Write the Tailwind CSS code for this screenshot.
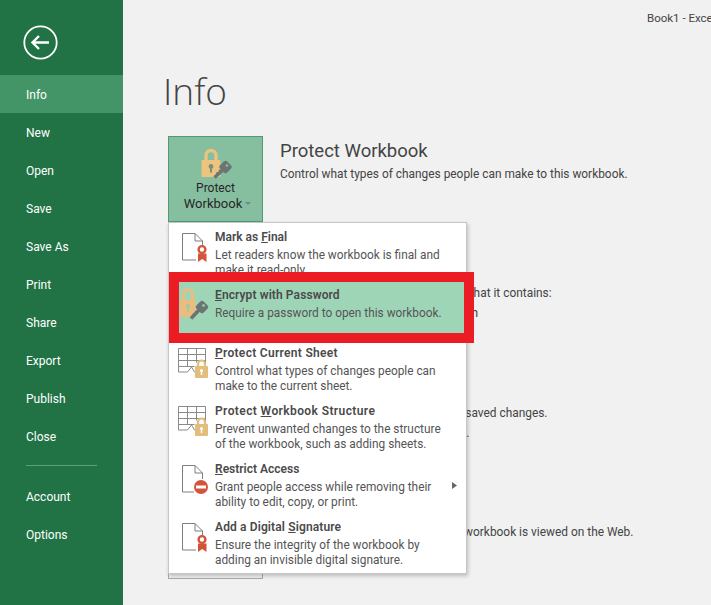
<!DOCTYPE html>
<html>
<head>
<meta charset="utf-8">
<script src="https://cdn.jsdelivr.net/npm/@tailwindcss/browser@4"></script>
</head>
<body class="m-0">
<div class="relative flex w-[711px] h-[605px] overflow-hidden bg-[#f1f1f1] font-['Roboto','Open_Sans',sans-serif] text-[#444444]">
  <aside class="w-[123px] shrink-0 bg-[#217346] text-white text-[12px] flex flex-col">
    <div class="h-[75px] pl-[23px] pt-[25px]">
      <svg width="35" height="35" viewBox="0 0 35 35" fill="none" stroke="white"><circle cx="17.500" cy="17.500" r="16.200" stroke-width="1.800"/><path d="M10 17.500H26M16 11l-6.500 6.500L16 24" stroke-width="2.400"/></svg>
    </div>
    <div class="h-[38px] flex items-center pl-[26px] pt-[2px] bg-[#439467]">Info</div>
    <div class="h-[38px] flex items-center pl-[26px] pt-[2px]">New</div>
    <div class="h-[38px] flex items-center pl-[26px] pt-[2px]">Open</div>
    <div class="h-[38px] flex items-center pl-[26px] pt-[2px]">Save</div>
    <div class="h-[38px] flex items-center pl-[26px] pt-[2px]">Save As</div>
    <div class="h-[38px] flex items-center pl-[26px] pt-[2px]">Print</div>
    <div class="h-[38px] flex items-center pl-[26px] pt-[2px]">Share</div>
    <div class="h-[38px] flex items-center pl-[26px] pt-[2px]">Export</div>
    <div class="h-[38px] flex items-center pl-[26px] pt-[2px]">Publish</div>
    <div class="h-[38px] flex items-center pl-[26px] pt-[2px]">Close</div>
    <div class="mt-[10px] mb-[11px] ml-[26px] w-[71px] h-px bg-[#5f9e7c]"></div>
    <div class="h-[38px] flex items-center pl-[26px] pt-[2px]">Account</div>
    <div class="h-[38px] flex items-center pl-[26px] pt-[2px]">Options</div>
  </aside>

  <main class="relative flex-1 pl-[40px]">
    <div class="h-[10px]"></div>
    <div class="text-[11.500px] leading-[16px] pl-[484px] whitespace-nowrap">Book1 - Excel</div>
    <h1 class="mt-[39px] h-[71px] font-['Open_Sans',sans-serif] text-[37px] leading-[52px] font-light text-[#444444]">Info</h1>

    <div class="pl-[5px] flex flex-col gap-[33px]">
      <section class="flex gap-[17px] h-[86px]">
        <div class="relative w-[95px] h-[86px] shrink-0 bg-[#86bfa0] border border-[#4f9a72] flex flex-col items-center text-[#262626] text-[12px] leading-[16px]">
          <svg class="mt-[11px] mb-[1px]" width="34" height="31" viewBox="0 0 34 31"><path d="M7 13V7.500a5 5 0 0 1 10 0V13" fill="none" stroke="#edc47e" stroke-width="3.400"/><rect x="2.500" y="12" width="19" height="17" rx="1" fill="#edc47e"/><circle cx="12" cy="18.500" r="2.400" fill="#7d8f78"/><rect x="11" y="19" width="2" height="5.500" fill="#7d8f78"/><path d="M25 21L15.500 29.500" stroke="#6d7573" stroke-width="3.400"/><path d="M17.500 24.500l2.500 2.500M20 22l2.500 2.500" stroke="#6d7573" stroke-width="2"/><rect x="21.500" y="14" width="10" height="10" rx="2" transform="rotate(45 26.500 19)" fill="#6d7573"/><circle cx="28" cy="17.500" r="1.300" fill="#86bfa0"/></svg>
          <span>Protect</span>
          <span class="flex items-center gap-[3px] pl-[4px] text-[13px]">Workbook<svg width="6" height="4" viewBox="0 0 6 4"><path d="M0 0h6L3 3z" fill="#6b8c78"/></svg></span>
        </div>
        <div class="pt-[3px]">
          <h2 class="text-[18.500px] leading-[24px] font-normal">Protect Workbook</h2>
          <p class="text-[11.900px] leading-[20px] mt-[1px]">Control what types of changes people can make to this workbook.</p>
        </div>
      </section>

      <section class="flex gap-[17px] h-[86px]">
        <div class="w-[95px] h-[86px] shrink-0 border border-[#ababab]"></div>
        <div class="pt-[2px]">
          <h2 class="text-[18.500px] leading-[24px] font-normal">Inspect Workbook</h2>
          <p class="text-[11.900px] leading-[20px] mt-[2px] whitespace-nowrap">Before publishing this file, be aware that it contains:</p>
          <p class="text-[11.900px] leading-[20px] whitespace-nowrap">Document properties and printer path</p>
        </div>
      </section>

      <section class="flex gap-[17px] h-[86px]">
        <div class="w-[95px] h-[86px] shrink-0 border border-[#ababab]"></div>
        <div class="pt-[2px]">
          <h2 class="text-[18.500px] leading-[24px] font-normal">Manage Workbook</h2>
          <p class="text-[11.900px] leading-[20px] mt-[3px] whitespace-nowrap">Check in, check out, and recover unsaved changes.</p>
          <p class="text-[11.900px] leading-[20px] tracking-[0.2px] whitespace-nowrap">There are no unsaved changes yet.</p>
        </div>
      </section>

      <section class="flex gap-[17px] h-[86px]">
        <div class="w-[95px] h-[86px] shrink-0 border border-[#ababab]"></div>
        <div class="pt-[2px]">
          <h2 class="text-[18.500px] leading-[24px] font-normal">Browser View Options</h2>
          <p class="text-[11.900px] leading-[20px] mt-[3px] whitespace-nowrap">Pick what users can see when this workbook is viewed on the Web.</p>
        </div>
      </section>
    </div>

    <!-- dropdown menu -->
    <div class="absolute left-[45px] top-[222px] w-[299px] h-[352px] bg-white border border-[#c6c6c6] shadow-[1px_2px_4px_rgba(0,0,0,0.22)] pt-[3px] text-[11.850px] leading-[18px] text-[#555555]">
      <div class="relative h-[58px] flex">
        <div class="w-[46px] shrink-0 pt-[6px] pl-[12px]">
          <svg width="28" height="32" viewBox="0 0 28 32" fill="none"><path d="M15 28H1.500V1.500H14L21.500 9V13M14 1.500V9H21.500" stroke="#7f7f7f"/><circle cx="21" cy="17.500" r="3.400" stroke="#d2553a" stroke-width="2.400"/><path d="M17 21.500h8.500v8.500L21.200 27 17 30z" fill="#d2553a"/></svg>
        </div>
        <div class="pt-[2px]">
          <div class="font-semibold text-[12px] text-[#4a4a4a]">Mark as <span class="underline">F</span>inal</div>
          <div class="whitespace-nowrap">Let readers know the workbook is final and</div>
          <div class="-mt-[3px] whitespace-nowrap">make it read-only.</div>
        </div>
      </div>

      <div class="relative h-[58px] flex">
        <div class="absolute left-0 -right-[8px] -top-[12px] -bottom-[1px] bg-[#9fd5b7] border-[10px] border-[#ec1c24]"></div>
        <div class="relative w-[46px] shrink-0 pt-[3px] pl-[11px]">
          <svg width="30" height="34" viewBox="0 0 30 34"><path d="M3.500 14V7a4.500 4.500 0 0 1 9 0v7" fill="none" stroke="#e9bd7e" stroke-width="3"/><rect x="0" y="13" width="15.500" height="17" fill="#e9bd7e"/><circle cx="8" cy="19" r="2.200" fill="#a9c79f"/><rect x="7" y="19" width="2" height="6" fill="#a9c79f"/><path d="M20 22L11 31.500" stroke="#6d7573" stroke-width="3.400"/><path d="M13 26.500l2.500 2.500M15.500 24l2.500 2.500" stroke="#6d7573" stroke-width="2"/><rect x="17" y="15" width="10" height="10" rx="2" transform="rotate(45 22 20)" fill="#6d7573"/><circle cx="23.500" cy="18.500" r="1.300" fill="#9fd5b7"/></svg>
        </div>
        <div class="relative pt-[2px]">
          <div class="font-semibold text-[12px] tracking-[0.1px] text-[#4a4a4a]"><span class="underline">E</span>ncrypt with Password</div>
          <div class="whitespace-nowrap">Require a password to open this workbook.</div>
        </div>
      </div>

      <div class="relative h-[58px] flex">
        <div class="w-[46px] shrink-0 pt-[6px] pl-[9px]">
          <svg width="32" height="34" viewBox="0 0 32 34" fill="none"><path d="M.500 24V.500h27v16M.500 6.500h27M.500 12.500h27M.500 18.500h16M9.500.500v18M18.500.500v14M.500 24h9l4-5 3 5h.500" stroke="#8a8a8a"/><path d="M20 19v-3a3.500 3.500 0 0 1 7 0v3" stroke="#e3bd7b" stroke-width="2.200"/><rect x="17" y="18" width="13" height="12" rx="1" fill="#e3bd7b"/><circle cx="23.500" cy="22.500" r="1.500" fill="white"/><rect x="22.800" y="23" width="1.400" height="4" fill="white"/></svg>
        </div>
        <div class="pt-[2px]">
          <div class="font-semibold text-[12px] tracking-[0.3px] text-[#4a4a4a]"><span class="underline">P</span>rotect Current Sheet</div>
          <div class="whitespace-nowrap">Control what types of changes people can</div>
          <div class="-mt-[3px] whitespace-nowrap">make to the current sheet.</div>
        </div>
      </div>

      <div class="relative h-[58px] flex">
        <div class="w-[46px] shrink-0 pt-[6px] pl-[9px]">
          <svg width="32" height="34" viewBox="0 0 32 34" fill="none"><path d="M.500 24V.500h27v16M.500 6.500h27M.500 12.500h27M.500 18.500h16M9.500.500v18M18.500.500v14M.500 24h9l4-5 3 5h.500" stroke="#8a8a8a"/><path d="M20 19v-3a3.500 3.500 0 0 1 7 0v3" stroke="#e3bd7b" stroke-width="2.200"/><rect x="17" y="18" width="13" height="12" rx="1" fill="#e3bd7b"/><circle cx="23.500" cy="22.500" r="1.500" fill="white"/><rect x="22.800" y="23" width="1.400" height="4" fill="white"/></svg>
        </div>
        <div class="pt-[2px]">
          <div class="font-semibold text-[12px] tracking-[0.4px] text-[#4a4a4a]">Protect <span class="underline">W</span>orkbook Structure</div>
          <div class="whitespace-nowrap">Prevent unwanted changes to the structure</div>
          <div class="-mt-[3px] whitespace-nowrap">of the workbook, such as adding sheets.</div>
        </div>
      </div>

      <div class="relative h-[58px] flex">
        <div class="w-[46px] shrink-0 pt-[6px] pl-[12px]">
          <svg width="28" height="32" viewBox="0 0 28 32" fill="none"><path d="M13 28H1.500V1.500H14L21.500 9V15M14 1.500V9H21.500" stroke="#7f7f7f"/><circle cx="20" cy="23" r="7" fill="#d2553a"/><rect x="15" y="21.500" width="10" height="3" fill="white"/></svg>
        </div>
        <div class="pt-[2px]">
          <div class="font-semibold text-[12px] text-[#4a4a4a]"><span class="underline">R</span>estrict Access</div>
          <div class="whitespace-nowrap">Grant people access while removing their</div>
          <div class="-mt-[3px] whitespace-nowrap">ability to edit, copy, or print.</div>
        </div>
        <svg class="absolute left-[283px] top-[24px]" width="5" height="7" viewBox="0 0 5 7"><path d="M0 0l5 3.500-5 3.500z" fill="#666666"/></svg>
      </div>

      <div class="relative h-[58px] flex">
        <div class="w-[46px] shrink-0 pt-[6px] pl-[12px]">
          <svg width="28" height="32" viewBox="0 0 28 32" fill="none"><path d="M15 28H1.500V1.500H14L21.500 9V13M14 1.500V9H21.500" stroke="#7f7f7f"/><circle cx="21" cy="17.500" r="3.400" stroke="#d2553a" stroke-width="2.400"/><path d="M17 21.500h8.500v8.500L21.200 27 17 30z" fill="#d2553a"/></svg>
        </div>
        <div class="pt-[2px]">
          <div class="font-semibold text-[12px] tracking-[0.13px] text-[#4a4a4a]">Add a Digital <span class="underline">S</span>ignature</div>
          <div class="whitespace-nowrap">Ensure the integrity of the workbook by</div>
          <div class="-mt-[3px] whitespace-nowrap">adding an invisible digital signature.</div>
        </div>
      </div>
    </div>
  </main>
</div>
</body>
</html>
